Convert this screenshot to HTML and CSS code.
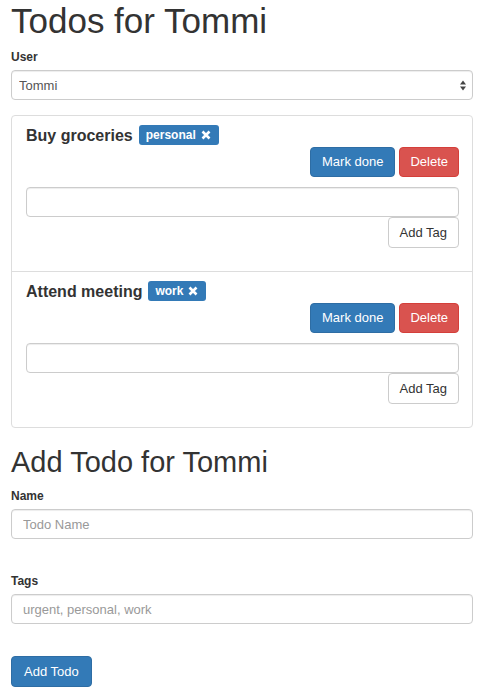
FILE: index.html
```html
<!DOCTYPE html>
<html lang="en">
<head>
<meta charset="utf-8">
<title>Todos for Tommi</title>
<link rel="stylesheet" href="styles.css">
</head>
<body>
<div class="page">
  <h1 class="title">Todos for Tommi</h1>
  <div class="field field-user">
    <label class="label">User</label>
    <div class="select-wrap">
      <select class="control select"><option>Tommi</option></select>
      <svg class="select-arrows" width="6" height="11" viewBox="0 0 6 11"><polygon points="0,4.5 3,0.5 6,4.5" fill="#444"/><polygon points="0,6.5 3,10.5 6,6.5" fill="#444"/></svg>
    </div>
  </div>

  <ul class="todo-list">
    <li class="todo">
      <div class="todo-head">
        <span class="todo-name">Buy groceries</span>
        <span class="tag">personal <svg class="tag-x" width="10" height="10" viewBox="0 0 10 10"><path d="M1.5 1.5 L8.5 8.5 M8.5 1.5 L1.5 8.5" stroke="#fff" stroke-width="2.6" stroke-linecap="butt"/></svg></span>
      </div>
      <div class="todo-actions">
        <button class="btn btn-primary">Mark done</button>
        <button class="btn btn-danger">Delete</button>
      </div>
      <input class="control tag-input" type="text">
      <div class="tag-actions">
        <button class="btn btn-default">Add Tag</button>
      </div>
    </li>
    <li class="todo">
      <div class="todo-head">
        <span class="todo-name">Attend meeting</span>
        <span class="tag">work <svg class="tag-x" width="10" height="10" viewBox="0 0 10 10"><path d="M1.5 1.5 L8.5 8.5 M8.5 1.5 L1.5 8.5" stroke="#fff" stroke-width="2.6" stroke-linecap="butt"/></svg></span>
      </div>
      <div class="todo-actions">
        <button class="btn btn-primary">Mark done</button>
        <button class="btn btn-danger">Delete</button>
      </div>
      <input class="control tag-input" type="text">
      <div class="tag-actions">
        <button class="btn btn-default">Add Tag</button>
      </div>
    </li>
  </ul>

  <h2 class="subtitle">Add Todo for Tommi</h2>
  <div class="field field-name">
    <label class="label">Name</label>
    <input class="control" type="text" placeholder="Todo Name">
  </div>
  <div class="field field-tags">
    <label class="label">Tags</label>
    <input class="control" type="text" placeholder="urgent, personal, work">
  </div>
  <button class="btn btn-primary btn-add">Add Todo</button>
</div>
</body>
</html>
```

FILE: styles.css
```css
* { box-sizing: border-box; }

html, body {
  margin: 0;
  padding: 0;
  background: #fff;
}

body {
  font-family: "Liberation Sans", Arial, Helvetica, sans-serif;
  color: #333;
  font-size: 13px;
}

.page {
  width: 462px;
  margin-left: 11px;
  padding-top: 2px;
}

.title {
  margin: 0;
  font-size: 35px;
  line-height: 38px;
  font-weight: 400;
}

.subtitle {
  margin: 18px 0 0;
  font-size: 29px;
  line-height: 32px;
  font-weight: 400;
}

.label {
  display: block;
  font-size: 12px;
  line-height: 17px;
  font-weight: 700;
  margin-bottom: 4px;
}

.field-user { margin-top: 9px; }
.field-name { margin-top: 10px; }
.field-tags { margin-top: 34px; }

.control {
  display: block;
  width: 100%;
  height: 30px;
  padding: 0 11px;
  font-family: inherit;
  font-size: 13px;
  color: #555;
  background: #fff;
  border: 1px solid #ccc;
  border-radius: 4px;
  box-shadow: inset 0 1px 1px rgba(0,0,0,.075);
  outline: none;
}

.control::placeholder { color: #999; }

.select-wrap { position: relative; }

.select {
  -webkit-appearance: none;
  appearance: none;
  padding-left: 7px;
}

.select-arrows {
  position: absolute;
  right: 7px;
  top: 10px;
}

.todo-list {
  list-style: none;
  margin: 15px 0 0;
  padding: 0;
  border: 1px solid #ddd;
  border-radius: 4px;
}

.todo {
  padding: 9px 13px 23px 14px;
}

.todo + .todo {
  border-top: 1px solid #ddd;
}

.todo-head {
  display: flex;
  align-items: center;
  gap: 6px;
  height: 21px;
}

.todo-name {
  font-size: 16px;
  line-height: 20px;
  font-weight: 700;
}

.tag {
  display: inline-flex;
  align-items: center;
  gap: 5px;
  height: 20px;
  padding: 0 8px 0 7px;
  background: #337ab7;
  color: #fff;
  font-size: 12px;
  font-weight: 700;
  border-radius: 3px;
  margin-top: -1px;
}

.tag-x { display: block; }

.todo-actions {
  display: flex;
  justify-content: flex-end;
  gap: 4px;
  margin-top: 1px;
}

.tag-input { margin-top: 10px; }

.tag-actions {
  display: flex;
  justify-content: flex-end;
}

.btn {
  display: inline-block;
  height: 30px;
  padding: 0 11px;
  font-family: inherit;
  font-size: 13px;
  line-height: 28px;
  border: 1px solid transparent;
  border-radius: 4px;
  cursor: pointer;
}

.btn-primary {
  background: #337ab7;
  border-color: #2e6da4;
  color: #fff;
}

.btn-danger {
  background: #d9534f;
  border-color: #d43f3a;
  color: #fff;
  padding: 0 10px;
}

.btn-default {
  background: #fff;
  border-color: #ccc;
  color: #333;
  height: 31px;
  padding: 0 11px;
}

.btn-add {
  margin-top: 32px;
  height: 31px;
  padding: 0 12px;
}
```
